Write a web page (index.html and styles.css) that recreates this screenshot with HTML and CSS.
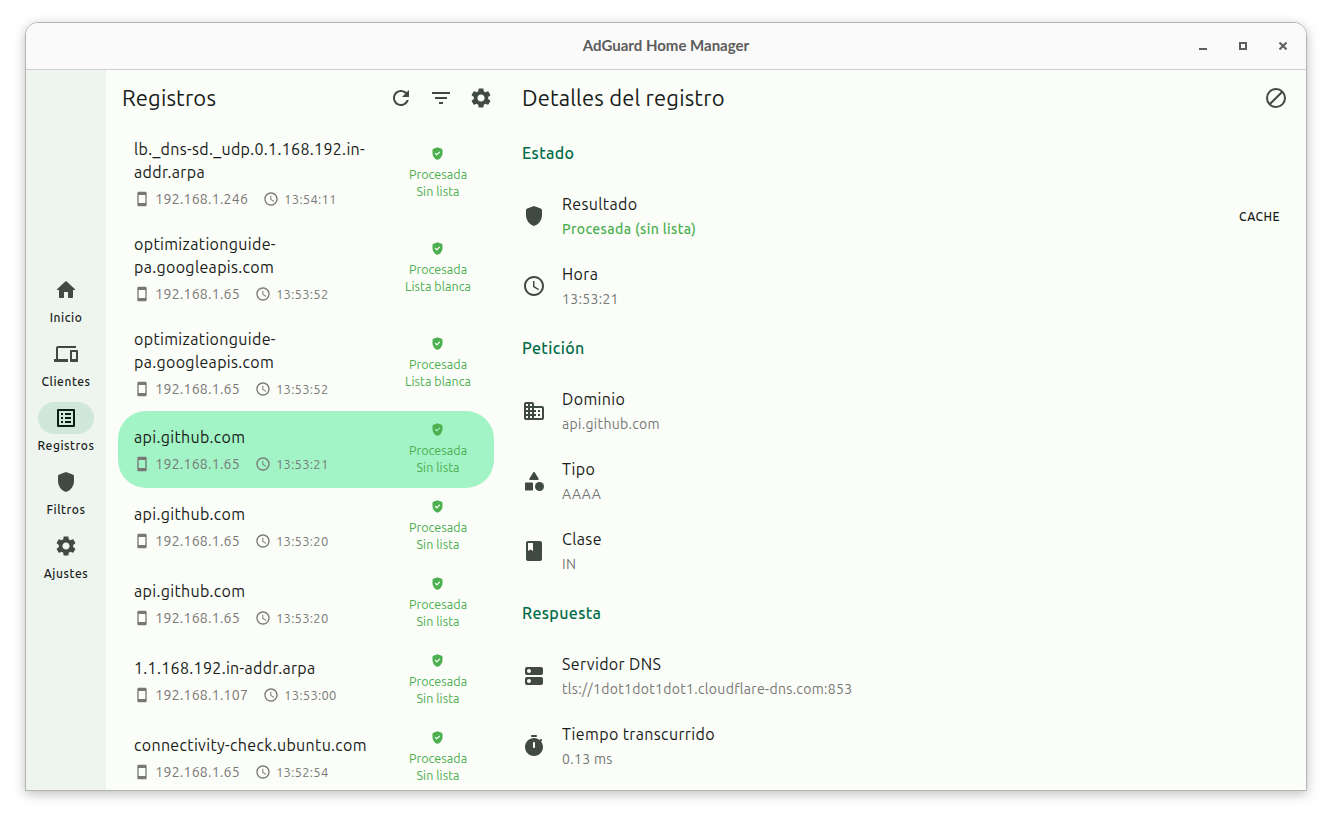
FILE: index.html
```html
<!DOCTYPE html>
<html lang="es">
<head>
<meta charset="utf-8">
<title>AdGuard Home Manager</title>
<link rel="stylesheet" href="styles.css">
</head>
<body>
<svg class="sprite" aria-hidden="true">
  <symbol id="home" viewBox="0 0 24 24"><path d="M10 19v-5h4v5c0 .55.45 1 1 1h3c.55 0 1-.45 1-1v-7h1.700c.46 0 .68-.57.33-.87L12.670 3.600c-.38-.34-.96-.34-1.340 0l-8.360 7.530c-.34.3-.13.87.33.87H5v7c0 .55.45 1 1 1h3c.55 0 1-.45 1-1z"/></symbol>
  <symbol id="devices" viewBox="0 0 24 24"><path d="M4 6h18V4H4c-1.100 0-2 .9-2 2v11H0v3h14v-3H4V6zm19 2h-6c-.55 0-1 .45-1 1v10c0 .55.45 1 1 1h6c.55 0 1-.45 1-1V9c0-.55-.45-1-1-1zm-1 9h-4v-7h4v7z"/></symbol>
  <symbol id="list" viewBox="0 0 24 24"><path d="M11 7h6v2h-6zm0 4h6v2h-6zm0 4h6v2h-6zM7 7h2v2H7zm0 4h2v2H7zm0 4h2v2H7zM20.100 3H3.900c-.5 0-.9.4-.9.9v16.200c0 .4.4.9.9.9h16.200c.4 0 .9-.5.9-.9V3.900c0-.5-.5-.9-.9-.9zM19 19H5V5h14v14z"/></symbol>
  <symbol id="shield" viewBox="0 0 24 24"><path d="M11.300 2.260l-6 2.250C4.520 4.810 4 5.550 4 6.390v4.700c0 5.050 3.410 9.760 8 10.910 4.590-1.150 8-5.860 8-10.910v-4.700c0-.83-.52-1.580-1.300-1.870l-6-2.250c-.45-.18-.95-.18-1.400-.01z"/></symbol>
  <symbol id="verified" viewBox="0 0 24 24"><path fill-rule="evenodd" d="M11.300 2.260l-6 2.250C4.520 4.810 4 5.550 4 6.390v4.700c0 5.050 3.410 9.760 8 10.910 4.590-1.150 8-5.860 8-10.910v-4.700c0-.83-.52-1.580-1.300-1.870l-6-2.250c-.45-.18-.95-.18-1.400-.01zM10.230 14.830L8.100 12.700a.996.996 0 1 1 1.410-1.410l1.430 1.420 3.540-3.540a.996.996 0 1 1 1.410 1.410l-4.240 4.240c-.4.4-1.030.4-1.420.01z"/></symbol>
  <symbol id="gear" viewBox="0 0 24 24"><path d="M19.140 12.940c.04-.3.06-.61.06-.94 0-.32-.02-.64-.07-.94l2.030-1.580c.18-.14.23-.41.12-.61l-1.920-3.320c-.12-.22-.37-.29-.59-.22l-2.390.96c-.5-.38-1.030-.7-1.620-.94l-.36-2.540c-.04-.24-.24-.41-.48-.41h-3.840c-.24 0-.43.17-.47.41l-.36 2.540c-.59.24-1.130.57-1.620.94l-2.390-.96c-.22-.08-.47 0-.59.22L2.740 8.870c-.12.21-.08.47.12.61l2.030 1.580c-.05.3-.09.63-.09.94s.02.64.07.94l-2.030 1.580c-.18.14-.23.41-.12.61l1.920 3.320c.12.22.37.29.59.22l2.390-.96c.5.38 1.030.7 1.620.94l.36 2.540c.05.24.24.41.48.41h3.840c.24 0 .44-.17.47-.41l.36-2.540c.59-.24 1.130-.56 1.620-.94l2.390.96c.22.08.47 0 .59-.22l1.920-3.320c.12-.22.07-.47-.12-.61l-2.010-1.580zM12 15.600c-1.980 0-3.600-1.620-3.600-3.600s1.620-3.600 3.600-3.600 3.600 1.620 3.600 3.600-1.620 3.600-3.600 3.600z"/></symbol>
  <symbol id="refresh" viewBox="0 0 24 24"><path d="M17.650 6.350C16.200 4.900 14.210 4 12 4c-4.420 0-7.990 3.580-7.990 8s3.570 8 7.990 8c3.730 0 6.840-2.550 7.730-6h-2.080c-.82 2.330-3.040 4-5.650 4-3.310 0-6-2.690-6-6s2.690-6 6-6c1.660 0 3.140.69 4.220 1.780L13 11h7V4l-2.350 2.350z"/></symbol>
  <symbol id="filter" viewBox="0 0 24 24"><path d="M10 18h4v-2h-4v2zM3 6v2h18V6H3zm3 7h12v-2H6v2z"/></symbol>
  <symbol id="block" viewBox="0 0 24 24"><path fill="none" stroke="currentColor" stroke-width="2" d="M21 12a9 9 0 1 1-18 0a9 9 0 1 1 18 0zM5.700 18.300L18.300 5.700"/></symbol>
  <symbol id="clock" viewBox="0 0 24 24"><path d="M11.990 2C6.470 2 2 6.480 2 12s4.470 10 9.990 10C17.520 22 22 17.520 22 12S17.520 2 11.990 2zM12 20c-4.420 0-8-3.580-8-8s3.580-8 8-8 8 3.580 8 8-3.580 8-8 8zm.5-13H11v6l5.250 3.150.75-1.230-4.500-2.670z"/></symbol>
  <symbol id="phone" viewBox="0 0 24 24"><path d="M17 1H7c-1.100 0-2 .9-2 2v18c0 1.100.9 2 2 2h10c1.100 0 2-.9 2-2V3c0-1.100-.9-2-2-2zm0 17H7V6h10v12z"/></symbol>
  <symbol id="domain" viewBox="0 0 24 24"><path d="M12 7V5c0-1.100-.9-2-2-2H4c-1.100 0-2 .9-2 2v14c0 1.100.9 2 2 2h16c1.100 0 2-.9 2-2V9c0-1.100-.9-2-2-2h-8zM6 19H4v-2h2v2zm0-4H4v-2h2v2zm0-4H4V9h2v2zm0-4H4V5h2v2zm4 12H8v-2h2v2zm0-4H8v-2h2v2zm0-4H8V9h2v2zm0-4H8V5h2v2zm10 12h-8v-2h2v-2h-2v-2h2v-2h-2V9h8v10zm-2-8h-2v2h2v-2zm0 4h-2v2h2v-2z"/></symbol>
  <symbol id="category" viewBox="0 0 24 24"><path d="M11.150 3.400L7.430 9.480c-.41.66.07 1.520.85 1.520h7.430c.78 0 1.260-.86.85-1.520L12.850 3.400c-.39-.64-1.310-.64-1.700 0z"/><circle cx="17.500" cy="17.500" r="4.500"/><path d="M4 21.500h6c.55 0 1-.45 1-1v-6c0-.55-.45-1-1-1H4c-.55 0-1 .45-1 1v6c0 .55.45 1 1 1z"/></symbol>
  <symbol id="book" viewBox="0 0 24 24"><path d="M18 2H6c-1.100 0-2 .9-2 2v16c0 1.100.9 2 2 2h12c1.100 0 2-.9 2-2V4c0-1.100-.9-2-2-2zM6 4h5v8l-2.500-1.500L6 12V4z"/></symbol>
  <symbol id="server" viewBox="0 0 24 24"><path d="M19 13H5c-1.100 0-2 .9-2 2v4c0 1.100.9 2 2 2h14c1.100 0 2-.9 2-2v-4c0-1.100-.9-2-2-2zM7 19c-1.100 0-2-.9-2-2s.9-2 2-2 2 .9 2 2-.9 2-2 2zM19 3H5c-1.100 0-2 .9-2 2v4c0 1.100.9 2 2 2h14c1.100 0 2-.9 2-2V5c0-1.100-.9-2-2-2zM7 9c-1.100 0-2-.9-2-2s.9-2 2-2 2 .9 2 2-.9 2-2 2z"/></symbol>
  <symbol id="timer" viewBox="0 0 24 24"><path d="M10 3h4c.55 0 1-.45 1-1s-.45-1-1-1h-4c-.55 0-1 .45-1 1s.45 1 1 1zm9.030 4.390l.75-.75a.993.993 0 0 0 0-1.400l-.01-.01a.993.993 0 0 0-1.400 0l-.75.75C16.070 4.740 14.120 4 12 4c-4.800 0-8.880 3.960-9 8.760C2.870 17.840 6.940 22 12 22c4.980 0 9-4.030 9-9 0-2.120-.74-4.070-1.970-5.610zM13 13c0 .55-.45 1-1 1s-1-.45-1-1V9c0-.55.45-1 1-1s1 .45 1 1v4z"/></symbol>
</svg>

<div class="window">
  <header class="titlebar">
    <span class="titlebar-spacer"></span>
    <h1 class="window-title">AdGuard Home Manager</h1>
    <div class="window-controls">
      <svg class="control" viewBox="0 0 8 8"><path d="M0 6h8v2H0z"/></svg>
      <svg class="control" viewBox="0 0 8 8"><path fill-rule="evenodd" d="M0 0h8v8H0zM2 2v4h4V2z"/></svg>
      <svg class="control" viewBox="0 0 8 8"><path fill="none" stroke="currentColor" stroke-width="2" d="M.5.5l7 7M7.500.5l-7 7"/></svg>
    </div>
  </header>

  <div class="app">
    <nav class="rail">
      <a class="rail-item"><span class="rail-pill"><svg class="icon"><use href="#home"/></svg></span><span class="rail-label">Inicio</span></a>
      <a class="rail-item"><span class="rail-pill"><svg class="icon"><use href="#devices"/></svg></span><span class="rail-label">Clientes</span></a>
      <a class="rail-item active"><span class="rail-pill"><svg class="icon"><use href="#list"/></svg></span><span class="rail-label">Registros</span></a>
      <a class="rail-item"><span class="rail-pill"><svg class="icon"><use href="#shield"/></svg></span><span class="rail-label">Filtros</span></a>
      <a class="rail-item"><span class="rail-pill"><svg class="icon"><use href="#gear"/></svg></span><span class="rail-label">Ajustes</span></a>
    </nav>

    <section class="logs">
      <div class="bar">
        <h2 class="bar-title">Registros</h2>
        <div class="bar-actions">
          <svg class="icon"><use href="#refresh"/></svg>
          <svg class="icon"><use href="#filter"/></svg>
          <svg class="icon"><use href="#gear"/></svg>
        </div>
      </div>

      <article class="log">
        <div class="log-main">
          <div class="log-domain">lb._dns-sd._udp.0.1.168.192.in-<br>addr.arpa</div>
          <div class="log-meta"><svg class="icon"><use href="#phone"/></svg><span class="log-ip">192.168.1.246</span><svg class="icon"><use href="#clock"/></svg><span class="log-time">13:54:11</span></div>
        </div>
        <div class="log-status"><svg class="icon"><use href="#verified"/></svg><span>Procesada</span><span>Sin lista</span></div>
      </article>
      <article class="log">
        <div class="log-main">
          <div class="log-domain">optimizationguide-<br>pa.googleapis.com</div>
          <div class="log-meta"><svg class="icon"><use href="#phone"/></svg><span class="log-ip">192.168.1.65</span><svg class="icon"><use href="#clock"/></svg><span class="log-time">13:53:52</span></div>
        </div>
        <div class="log-status"><svg class="icon"><use href="#verified"/></svg><span>Procesada</span><span>Lista blanca</span></div>
      </article>
      <article class="log">
        <div class="log-main">
          <div class="log-domain">optimizationguide-<br>pa.googleapis.com</div>
          <div class="log-meta"><svg class="icon"><use href="#phone"/></svg><span class="log-ip">192.168.1.65</span><svg class="icon"><use href="#clock"/></svg><span class="log-time">13:53:52</span></div>
        </div>
        <div class="log-status"><svg class="icon"><use href="#verified"/></svg><span>Procesada</span><span>Lista blanca</span></div>
      </article>
      <article class="log selected">
        <div class="log-main">
          <div class="log-domain">api.github.com</div>
          <div class="log-meta"><svg class="icon"><use href="#phone"/></svg><span class="log-ip">192.168.1.65</span><svg class="icon"><use href="#clock"/></svg><span class="log-time">13:53:21</span></div>
        </div>
        <div class="log-status"><svg class="icon"><use href="#verified"/></svg><span>Procesada</span><span>Sin lista</span></div>
      </article>
      <article class="log">
        <div class="log-main">
          <div class="log-domain">api.github.com</div>
          <div class="log-meta"><svg class="icon"><use href="#phone"/></svg><span class="log-ip">192.168.1.65</span><svg class="icon"><use href="#clock"/></svg><span class="log-time">13:53:20</span></div>
        </div>
        <div class="log-status"><svg class="icon"><use href="#verified"/></svg><span>Procesada</span><span>Sin lista</span></div>
      </article>
      <article class="log">
        <div class="log-main">
          <div class="log-domain">api.github.com</div>
          <div class="log-meta"><svg class="icon"><use href="#phone"/></svg><span class="log-ip">192.168.1.65</span><svg class="icon"><use href="#clock"/></svg><span class="log-time">13:53:20</span></div>
        </div>
        <div class="log-status"><svg class="icon"><use href="#verified"/></svg><span>Procesada</span><span>Sin lista</span></div>
      </article>
      <article class="log">
        <div class="log-main">
          <div class="log-domain">1.1.168.192.in-addr.arpa</div>
          <div class="log-meta"><svg class="icon"><use href="#phone"/></svg><span class="log-ip">192.168.1.107</span><svg class="icon"><use href="#clock"/></svg><span class="log-time">13:53:00</span></div>
        </div>
        <div class="log-status"><svg class="icon"><use href="#verified"/></svg><span>Procesada</span><span>Sin lista</span></div>
      </article>
      <article class="log">
        <div class="log-main">
          <div class="log-domain">connectivity-check.ubuntu.com</div>
          <div class="log-meta"><svg class="icon"><use href="#phone"/></svg><span class="log-ip">192.168.1.65</span><svg class="icon"><use href="#clock"/></svg><span class="log-time">13:52:54</span></div>
        </div>
        <div class="log-status"><svg class="icon"><use href="#verified"/></svg><span>Procesada</span><span>Sin lista</span></div>
      </article>
    </section>

    <main class="details">
      <div class="bar">
        <h2 class="bar-title">Detalles del registro</h2>
        <div class="bar-actions"><svg class="icon"><use href="#block"/></svg></div>
      </div>

      <h3 class="section">Estado</h3>
      <div class="row">
        <svg class="icon"><use href="#shield"/></svg>
        <div class="row-text"><span class="row-title">Resultado</span><span class="row-value ok">Procesada (sin lista)</span></div>
        <span class="row-tag">CACHE</span>
      </div>
      <div class="row">
        <svg class="icon"><use href="#clock"/></svg>
        <div class="row-text"><span class="row-title">Hora</span><span class="row-value">13:53:21</span></div>
      </div>

      <h3 class="section">Petición</h3>
      <div class="row">
        <svg class="icon"><use href="#domain"/></svg>
        <div class="row-text"><span class="row-title">Dominio</span><span class="row-value">api.github.com</span></div>
      </div>
      <div class="row">
        <svg class="icon"><use href="#category"/></svg>
        <div class="row-text"><span class="row-title">Tipo</span><span class="row-value">AAAA</span></div>
      </div>
      <div class="row">
        <svg class="icon"><use href="#book"/></svg>
        <div class="row-text"><span class="row-title">Clase</span><span class="row-value">IN</span></div>
      </div>

      <h3 class="section">Respuesta</h3>
      <div class="row">
        <svg class="icon"><use href="#server"/></svg>
        <div class="row-text"><span class="row-title">Servidor DNS</span><span class="row-value">tls://1dot1dot1dot1.cloudflare-dns.com:853</span></div>
      </div>
      <div class="row">
        <svg class="icon"><use href="#timer"/></svg>
        <div class="row-text"><span class="row-title">Tiempo transcurrido</span><span class="row-value">0.13 ms</span></div>
      </div>
    </main>
  </div>
</div>
</body>
</html>
```
FILE: styles.css
```css
:root {
  --surface: #fbfdf8;
  --rail: #eef5ef;
  --pill: #d0e8d9;
  --selected: #a2f4c6;
  --primary: #006c48;
  --success: #4caf50;
  --ink: #191c1a;
  --icon: #404943;
  --muted: #777876;
}

* { box-sizing: border-box; }

body {
  margin: 0;
  width: 1332px;
  height: 819px;
  padding: 22px 25px;
  overflow: hidden;
  background: #fff;
  color: var(--ink);
  font-family: Ubuntu, "Noto Sans", sans-serif;
  white-space: nowrap;
}

h1, h2, h3 { margin: 0; }

.sprite { display: none; }

.icon {
  flex: none;
  width: 24px;
  height: 24px;
  fill: currentColor;
}

.window {
  width: 1282px;
  height: 769px;
  border: 1px solid #b4b4b4;
  border-radius: 13px 13px 0 0;
  overflow: hidden;
  background: var(--surface);
  box-shadow: 0 3px 12px rgba(0, 0, 0, .26);
}

.titlebar {
  display: grid;
  grid-template-columns: 1fr auto 1fr;
  align-items: center;
  height: 47px;
  border-bottom: 1px solid #cfcfcf;
  background: #fafafa;
  color: #5c5c5c;
}

.window-title {
  padding-bottom: 2px;
  font: 700 15px/20px "Google Sans", "Product Sans", Lato, sans-serif;
}

.window-controls {
  display: flex;
  justify-content: flex-end;
  gap: 32px;
  padding-right: 19px;
}

.control {
  width: 8px;
  height: 8px;
  fill: currentColor;
}

.app {
  display: grid;
  grid-template-columns: 80px 400px 1fr;
  height: 720px;
}

.rail {
  display: flex;
  flex-direction: column;
  gap: 12px;
  padding: 204px 0 0;
  background: var(--rail);
}

.rail-item {
  display: flex;
  flex-direction: column;
  align-items: center;
  gap: 4px;
}

.rail-pill {
  display: grid;
  place-items: center;
  width: 56px;
  height: 32px;
  border-radius: 16px;
  color: var(--icon);
}

.rail-label {
  font-size: 12px;
  font-weight: 500;
  line-height: 16px;
  letter-spacing: .58px;
}

.active .rail-pill {
  background: var(--pill);
  color: #0a1f14;
}

.logs, .details {
  overflow: hidden;
}

.bar {
  display: flex;
  align-items: center;
  justify-content: space-between;
  height: 56px;
  padding: 0 13px 0 16px;
}

.details .bar { padding-right: 18px; }

.bar-title {
  font-size: 22px;
  font-weight: 400;
  line-height: 28px;
  letter-spacing: .15px;
}

.bar-actions {
  display: flex;
  gap: 16px;
  color: var(--icon);
}

.log {
  display: flex;
  align-items: center;
  justify-content: space-between;
  margin: 0 12px;
  padding: 12px 16px;
  border-radius: 28px;
}

.selected { background: var(--selected); }

.log-domain {
  font-size: 16px;
  line-height: 23px;
  letter-spacing: .33px;
}

.log-meta {
  display: flex;
  align-items: center;
  height: 20px;
  margin-top: 5px;
  color: var(--muted);
}

.log-meta .icon { width: 16px; height: 16px; }

.log-ip {
  margin: 0 15px 0 5.300px;
  font-size: 14px;
  line-height: 20px;
  letter-spacing: .27px;
}

.log-time {
  margin-left: 5px;
  font-size: 13px;
  line-height: 20px;
  letter-spacing: .27px;
}

.log-status {
  display: flex;
  flex-direction: column;
  align-items: center;
  width: 80px;
  color: var(--success);
  font-size: 12.500px;
  line-height: 17px;
  letter-spacing: .05px;
}

.log-status .icon {
  width: 15px;
  height: 15px;
  margin: -1px 1px 5px 0;
}

.section {
  padding-left: 16px;
  color: var(--primary);
  font-size: 16px;
  font-weight: 500;
  line-height: 55px;
  letter-spacing: .37px;
}

.row {
  display: flex;
  align-items: center;
  gap: 16px;
  height: 70px;
  padding: 0 26px 0 16px;
}

.row > .icon { color: var(--icon); }

.row-text {
  display: flex;
  flex: 1;
  flex-direction: column;
}

.row-title {
  font-size: 16px;
  line-height: 24px;
  letter-spacing: .36px;
}

.row-value {
  margin-bottom: -1px;
  color: var(--muted);
  font-size: 14px;
  line-height: 26px;
  letter-spacing: .32px;
}

.row-value.ok {
  color: var(--success);
  font-weight: 500;
  letter-spacing: .38px;
}

.row-tag {
  font-size: 12px;
  font-weight: 500;
  letter-spacing: .5px;
}
```
